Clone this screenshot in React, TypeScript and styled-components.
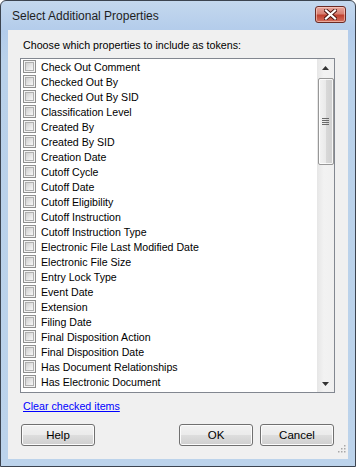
import React from "react";
import styled, { createGlobalStyle } from "styled-components";

const Global = createGlobalStyle`
  html, body { margin: 0; padding: 0; background: #ffffff; }
  * { box-sizing: border-box; }
`;

const Window = styled.div`
  width: 356px;
  height: 467px;
  border: 1px solid #3c4450;
  border-radius: 6px 6px 0 0;
  background: linear-gradient(180deg, #c4d8ee 0px, #b3cceb 30px, #b9d1ea 60px, #bcd3eb 100%);
  display: flex;
  flex-direction: column;
  overflow: hidden;
  font-family: "Liberation Sans", Arial, sans-serif;
`;

const TitleBar = styled.div`
  height: 29px;
  display: flex;
  align-items: center;
  justify-content: space-between;
  padding: 0 9px 0 11px;
`;

const TitleText = styled.span`
  font-size: 12px;
  color: #1e1e1e;
`;

const CloseBtn = styled.div`
  width: 31px;
  height: 17px;
  margin-top: -2px;
  border: 1px solid #6b2a25;
  border-radius: 3px;
  background: linear-gradient(180deg, #e7a59d 0%, #d88173 45%, #c0402f 55%, #d3705f 100%);
  box-shadow: inset 0 0 0 1px rgba(255, 220, 210, 0.55);
  display: flex;
  align-items: center;
  justify-content: center;
`;

const Client = styled.div`
  flex: 1;
  margin: 0 7px 7px 7px;
  background: #f0f0f0;
  display: flex;
  flex-direction: column;
  padding: 8px 14px 0 12px;
  position: relative;
`;

const Prompt = styled.div`
  font-size: 10.7px;
  line-height: 15px;
  color: #000;
  padding-left: 3px;
  height: 20px;
`;

const ListBox = styled.div`
  width: 315px;
  height: 335px;
  border: 1px solid #828790;
  background: #fff;
  display: flex;
`;

const Items = styled.div`
  flex: 1;
  padding: 0 0 0 2px;
`;

const Row = styled.div`
  height: 15px;
  display: flex;
  align-items: center;
  gap: 5px;
  font-size: 10.6px;
  color: #000;
  white-space: nowrap;
`;

const Box = styled.span`
  width: 13px;
  height: 13px;
  border: 1px solid #8f8f8f;
  background: #f4f4f4;
  display: inline-block;
  flex: none;
  position: relative;
  &::after {
    content: "";
    position: absolute;
    inset: 1px;
    border: 1px solid #b0b0b0;
    background: linear-gradient(135deg, #cfcfcf 0%, #e8e8e8 60%, #f7f7f7 100%);
  }
`;

const ScrollBar = styled.div`
  width: 17px;
  background: linear-gradient(90deg, #e6e6e6, #f2f2f2 40%, #f0f0f0);
  display: flex;
  flex-direction: column;
  align-items: center;
`;

const Arrow = styled.div`
  width: 17px;
  height: 17px;
  display: flex;
  align-items: center;
  justify-content: center;
`;

const Thumb = styled.div`
  width: 16px;
  height: 87px;
  margin-top: 2px;
  border: 1px solid #979797;
  border-radius: 2px;
  background: linear-gradient(90deg, #f3f3f3 0%, #e9e9e9 50%, #d8d8d8 51%, #d0d0d0 100%);
  box-shadow: inset 0 0 0 1px rgba(255, 255, 255, 0.8);
  display: flex;
  align-items: center;
  justify-content: center;
`;

const Track = styled.div`
  flex: 1;
`;

const Link = styled.a`
  margin-top: 6px;
  padding-left: 3px;
  font-size: 10.7px;
  line-height: 14px;
  color: #0000ff;
  text-decoration: underline;
  cursor: pointer;
`;

const ButtonRow = styled.div`
  display: flex;
  margin-top: 11px;
  padding-left: 1px;
`;

const Spacer = styled.div`
  flex: 1;
`;

const Button = styled.button<{ $gap?: number }>`
  width: 74px;
  height: 22px;
  margin-left: ${(p) => p.$gap ?? 0}px;
  border: 1px solid #707070;
  border-radius: 3px;
  background: linear-gradient(180deg, #f2f2f2 0%, #ebebeb 48%, #dddddd 52%, #cfcfcf 100%);
  box-shadow: inset 0 0 0 1px #fcfcfc;
  font-family: "Liberation Sans", Arial, sans-serif;
  font-size: 11.5px;
  color: #000;
  padding: 0;
`;

const Grip = styled.div`
  position: absolute;
  right: 2px;
  bottom: 2px;
`;

const props = [
  "Check Out Comment",
  "Checked Out By",
  "Checked Out By SID",
  "Classification Level",
  "Created By",
  "Created By SID",
  "Creation Date",
  "Cutoff Cycle",
  "Cutoff Date",
  "Cutoff Eligibility",
  "Cutoff Instruction",
  "Cutoff Instruction Type",
  "Electronic File Last Modified Date",
  "Electronic File Size",
  "Entry Lock Type",
  "Event Date",
  "Extension",
  "Filing Date",
  "Final Disposition Action",
  "Final Disposition Date",
  "Has Document Relationships",
  "Has Electronic Document",
];

const App = () => {
  return (
    <>
      <Global />
      <Window>
        <TitleBar>
          <TitleText>Select Additional Properties</TitleText>
          <CloseBtn>
            <svg width="13" height="11" viewBox="0 0 13 11">
              <path
                d="M2 1.5 L11 9.5 M11 1.5 L2 9.5"
                stroke="#4a1510"
                strokeWidth="4"
                strokeLinecap="square"
              />
              <path
                d="M2 1.5 L11 9.5 M11 1.5 L2 9.5"
                stroke="#ffffff"
                strokeWidth="2.2"
                strokeLinecap="square"
              />
            </svg>
          </CloseBtn>
        </TitleBar>
        <Client>
          <Prompt>Choose which properties to include as tokens:</Prompt>
          <ListBox>
            <Items>
              {props.map((name) => (
                <Row key={name}>
                  <Box />
                  {name}
                </Row>
              ))}
            </Items>
            <ScrollBar>
              <Arrow>
                <svg width="7" height="4" viewBox="0 0 7 4">
                  <path d="M3.5 0 L7 4 L0 4 Z" fill="#333" />
                </svg>
              </Arrow>
              <Thumb>
                <svg width="7" height="7" viewBox="0 0 7 7">
                  <path d="M0 0.5h7M0 2.5h7M0 4.5h7M0 6.5h7" stroke="#6a6a6a" strokeWidth="1" />
                </svg>
              </Thumb>
              <Track />
              <Arrow>
                <svg width="7" height="4" viewBox="0 0 7 4">
                  <path d="M0 0 L7 0 L3.5 4 Z" fill="#333" />
                </svg>
              </Arrow>
            </ScrollBar>
          </ListBox>
          <Link>Clear checked items</Link>
          <ButtonRow>
            <Button>Help</Button>
            <Spacer />
            <Button>OK</Button>
            <Button $gap={7}>Cancel</Button>
          </ButtonRow>
          <Grip>
            <svg width="8" height="8" viewBox="0 0 8 8" fill="#a8a8a8">
              <rect x="6" y="0" width="1.5" height="1.5" />
              <rect x="3" y="3" width="1.5" height="1.5" />
              <rect x="6" y="3" width="1.5" height="1.5" />
              <rect x="0" y="6" width="1.5" height="1.5" />
              <rect x="3" y="6" width="1.5" height="1.5" />
              <rect x="6" y="6" width="1.5" height="1.5" />
            </svg>
          </Grip>
        </Client>
      </Window>
    </>
  );
};

export default App;
